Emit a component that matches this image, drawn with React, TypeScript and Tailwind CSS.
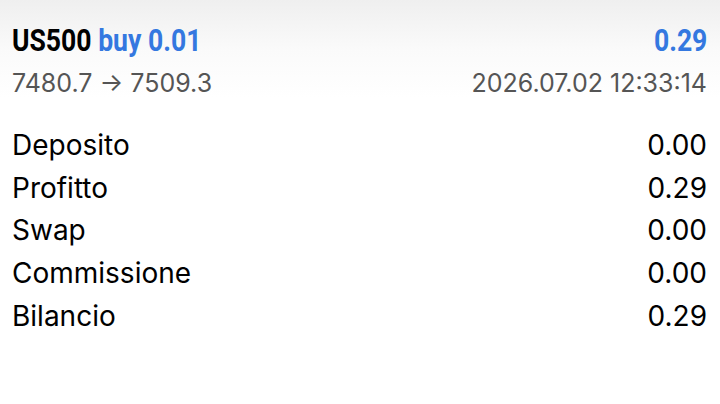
import React from "react";

const rows: [string, string][] = [
  ["Deposito", "0.00"],
  ["Profitto", "0.29"],
  ["Swap", "0.00"],
  ["Commissione", "0.00"],
  ["Bilancio", "0.29"],
];

export default function App() {
  return (
    <div className="w-[720px] h-[404px] overflow-hidden bg-white font-['Inter',sans-serif] text-black">
      <div className="bg-gradient-to-b from-[#efefef] via-[#fafafa] to-white pt-[23px] pl-[12px] pr-[13px]">
        <div className="flex items-baseline justify-between h-[34px] font-['Roboto',sans-serif] font-bold text-[32px] leading-[34px]">
          <div className="origin-left scale-x-[0.83] whitespace-nowrap">
            <span className="text-black">US500</span>{" "}
            <span className="text-[#3478e0]">buy 0.01</span>
          </div>
          <span className="origin-right scale-x-[0.83] text-[#3478e0]">0.29</span>
        </div>
        <div className="flex items-baseline justify-between mt-[11px] text-[25px] leading-[30px] text-[#555555]">
          <span>7480.7 → 7509.3</span>
          <span>2026.07.02 12:33:14</span>
        </div>
      </div>
      <div className="pl-[12px] pr-[13px] pt-[26px] flex flex-col">
        {rows.map(([label, value]) => (
          <div key={label} className="flex items-baseline justify-between h-[42.7px] text-[28px] leading-[42.7px]">
            <span>{label}</span>
            <span>{value}</span>
          </div>
        ))}
      </div>
    </div>
  );
}
